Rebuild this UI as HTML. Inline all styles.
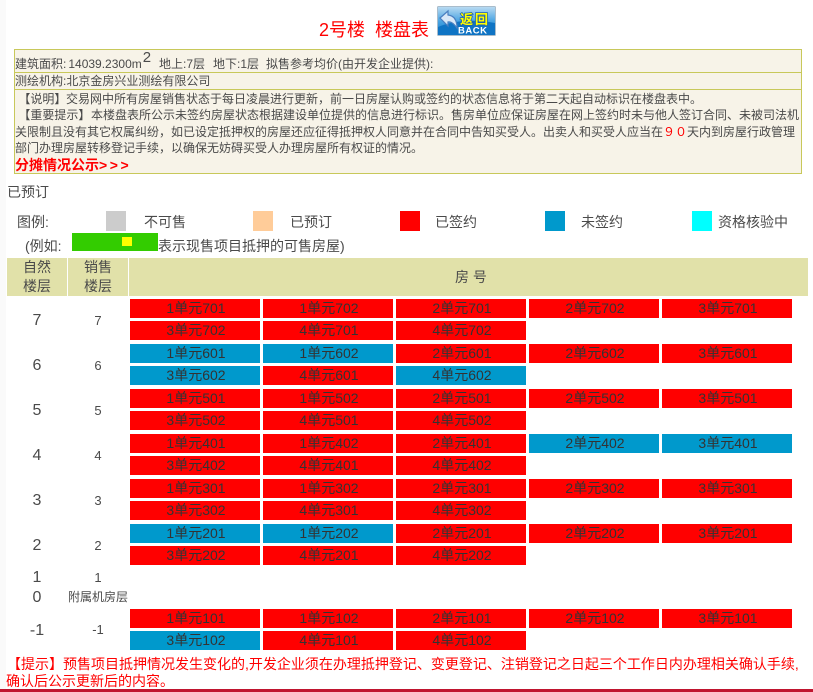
<!DOCTYPE html>
<html lang="zh">
<head>
<meta charset="utf-8">
<title>楼盘表</title>
<style>
html,body{margin:0;padding:0;background:#fff}
body{position:relative;width:813px;height:692px;overflow:hidden;font-family:"Liberation Sans","Noto Sans CJK SC",sans-serif;color:#4a4a4a;font-size:14px}
.a{position:absolute;white-space:nowrap}
.strip{left:0;top:0;width:6px;height:692px;background:#fafafa}
.title{left:319px;top:19px;font-size:18px;line-height:22px;color:#f00}
.info{left:14px;top:49px;width:786px;height:123px;background:#f7f3e8;border:1px solid #c8c85a}
.hr{left:15px;width:786px;height:1px;background:#c8c85a}
.t{left:15px;font-size:12px;line-height:16px;color:#4a4a4a}
.red{color:#f00}
.sw{width:20px;height:20px;top:211px}
.lg{top:213px;line-height:18px}
.h{top:258px;height:38px;background:#e1e1a9;text-align:center;line-height:19px}
.f1{width:60px;left:7px;text-align:center;font-size:16px;line-height:20px}
.f2{width:60px;left:68px;text-align:center;font-size:13px;line-height:18px}
.r{position:absolute;left:130px;width:665px;display:flex;flex-wrap:wrap;gap:3px}
.r div{width:130px;height:19px;line-height:19px;text-align:center;font-size:14px;color:#333;background:#f00;padding-left:2px;box-sizing:border-box}
.r .b{background:#09c}
.n{left:7px;font-size:14px;line-height:18px;color:#f00}
</style>
</head>
<body>
<div class="a strip"></div>
<div class="a title">2号楼&nbsp;&nbsp;楼盘表</div>
<svg class="a" style="left:437px;top:6px" width="59" height="30" viewBox="0 0 59 30">
<defs><linearGradient id="g" x1="0" y1="0" x2="0" y2="1"><stop offset="0" stop-color="#bcdcf2"/><stop offset=".5" stop-color="#4aa4e2"/><stop offset="1" stop-color="#0f78c8"/></linearGradient></defs>
<rect x=".5" y=".5" width="58" height="29" rx="1" fill="url(#g)" stroke="#a9bccb"/>
<path d="M1 21Q25 11 58 17V29H1Z" fill="#0f74c4"/>
<path d="M3 12L11 5V9Q20 10 20 22Q15 15 11 16V20Z" fill="#d8e8f8" stroke="#4a7fc0" stroke-width="1.2"/>
<text x="23" y="18" font-size="13" font-weight="700" fill="#ff0" stroke="#2060a8" stroke-width="1.5" paint-order="stroke" font-family="'Noto Sans CJK SC',sans-serif">返</text>
<text x="38" y="18" font-size="13" font-weight="700" fill="#ff0" stroke="#2060a8" stroke-width="1.5" paint-order="stroke" font-family="'Noto Sans CJK SC',sans-serif">回</text>
<text x="21" y="27.5" font-size="9.5" font-weight="700" fill="#fff" letter-spacing=".5" font-family="'Liberation Sans',sans-serif">BACK</text>
</svg>

<div class="a info"></div>
<div class="a hr" style="top:72px"></div>
<div class="a hr" style="top:89px"></div>
<div class="a t" style="top:56px">建筑面积:<span style="margin-left:2px">14039.2300m</span><sup style="font-size:15px;line-height:0;margin-left:1px;position:relative;top:-1px">2</sup></div>
<div class="a t" style="top:56px;left:159px">地上:7层</div>
<div class="a t" style="top:56px;left:213px">地下:1层</div>
<div class="a t" style="top:56px;left:266px">拟售参考均价(由开发企业提供):</div>
<div class="a t" style="top:73px">测绘机构:北京金房兴业测绘有限公司</div>
<div class="a t" style="top:91px">&nbsp;【说明】</div>
<div class="a t" style="top:91px;left:66px">交易网中所有房屋销售状态于每日凌晨进行更新，前一日房屋认购或签约的状态信息将于第二天起自动标识在楼盘表中。</div>
<div class="a t" style="top:107px">&nbsp;【重要提示】</div>
<div class="a t" style="top:107px;left:91px">本楼盘表所公示未签约房屋状态根据建设单位提供的信息进行标识。售房单位应保证房屋在网上签约时未与他人签订合同、未被司法机</div>
<div class="a t" style="top:124px">关限制且没有其它权属纠纷，如已设定抵押权的房屋还应征得抵押权人同意并在合同中告知买受人。出卖人和买受人应当在<span class="red">９０</span>天内到房屋行政管理</div>
<div class="a t" style="top:140px">部门办理房屋转移登记手续，以确保无妨碍买受人办理房屋所有权证的情况。</div>
<div class="a t" style="top:157px;font-size:14px;font-weight:700;color:#f00">分摊情况公示<span style="letter-spacing:2.6px">&gt;&gt;&gt;</span></div>

<div class="a" style="left:7px;top:183px;line-height:18px">已预订</div>
<div class="a lg" style="left:17px">图例:</div>
<div class="a sw" style="left:106px;background:#ccc"></div>
<div class="a lg" style="left:144px">不可售</div>
<div class="a sw" style="left:253px;background:#fc9"></div>
<div class="a lg" style="left:290px">已预订</div>
<div class="a sw" style="left:400px;background:#f00"></div>
<div class="a lg" style="left:435px">已签约</div>
<div class="a sw" style="left:545px;background:#09c"></div>
<div class="a lg" style="left:581px">未签约</div>
<div class="a sw" style="left:692px;background:#0ff"></div>
<div class="a lg" style="left:718px">资格核验中</div>
<div class="a" style="left:25px;top:237px;line-height:18px">(例如:</div>
<div class="a" style="left:72px;top:233px;width:86px;height:18px;background:#3c0"></div>
<div class="a" style="left:122px;top:237px;width:10px;height:9px;background:#ff0"></div>
<div class="a" style="left:158px;top:237px;line-height:18px">表示现售项目抵押的可售房屋)</div>

<div class="a h" style="left:7px;width:60px">自然<br>楼层</div>
<div class="a h" style="left:68px;width:60px">销售<br>楼层</div>
<div class="a h" style="left:129px;width:679px;line-height:38px;box-sizing:border-box;padding-left:5px">房 号</div>

<div class="a f1" style="top:311px">7</div><div class="a f2" style="top:312px">7</div>
<div class="r" style="top:299px"><div>1单元701</div><div>1单元702</div><div>2单元701</div><div>2单元702</div><div>3单元701</div><div>3单元702</div><div>4单元701</div><div>4单元702</div></div>

<div class="a f1" style="top:356px">6</div><div class="a f2" style="top:357px">6</div>
<div class="r" style="top:344px"><div class="b">1单元601</div><div class="b">1单元602</div><div>2单元601</div><div>2单元602</div><div>3单元601</div><div class="b">3单元602</div><div>4单元601</div><div class="b">4单元602</div></div>

<div class="a f1" style="top:401px">5</div><div class="a f2" style="top:402px">5</div>
<div class="r" style="top:389px"><div>1单元501</div><div>1单元502</div><div>2单元501</div><div>2单元502</div><div>3单元501</div><div>3单元502</div><div>4单元501</div><div>4单元502</div></div>

<div class="a f1" style="top:446px">4</div><div class="a f2" style="top:447px">4</div>
<div class="r" style="top:434px"><div>1单元401</div><div>1单元402</div><div>2单元401</div><div class="b">2单元402</div><div class="b">3单元401</div><div>3单元402</div><div>4单元401</div><div>4单元402</div></div>

<div class="a f1" style="top:491px">3</div><div class="a f2" style="top:492px">3</div>
<div class="r" style="top:479px"><div>1单元301</div><div>1单元302</div><div>2单元301</div><div>2单元302</div><div>3单元301</div><div>3单元302</div><div>4单元301</div><div>4单元302</div></div>

<div class="a f1" style="top:536px">2</div><div class="a f2" style="top:537px">2</div>
<div class="r" style="top:524px"><div class="b">1单元201</div><div class="b">1单元202</div><div>2单元201</div><div>2单元202</div><div>3单元201</div><div>3单元202</div><div>4单元201</div><div>4单元202</div></div>

<div class="a f1" style="top:568px">1</div><div class="a f2" style="top:569px">1</div>
<div class="a f1" style="top:588px">0</div><div class="a f2" style="top:588px;font-size:12px">附属机房层</div>

<div class="a f1" style="top:621px">-1</div><div class="a f2" style="top:621px">-1</div>
<div class="r" style="top:609px"><div>1单元101</div><div>1单元102</div><div>2单元101</div><div>2单元102</div><div>3单元101</div><div class="b">3单元102</div><div>4单元101</div><div>4单元102</div></div>

<div class="a n" style="top:655px">【提示】预售项目抵押情况发生变化的,开发企业须在办理抵押登记、变更登记、注销登记之日起三个工作日内办理相关确认手续,</div>
<div class="a n" style="left:6px;top:672px">确认后公示更新后的内容。</div>
<div class="a" style="left:0;top:689px;width:813px;height:3px;background:#c0152f"></div>
</body>
</html>
